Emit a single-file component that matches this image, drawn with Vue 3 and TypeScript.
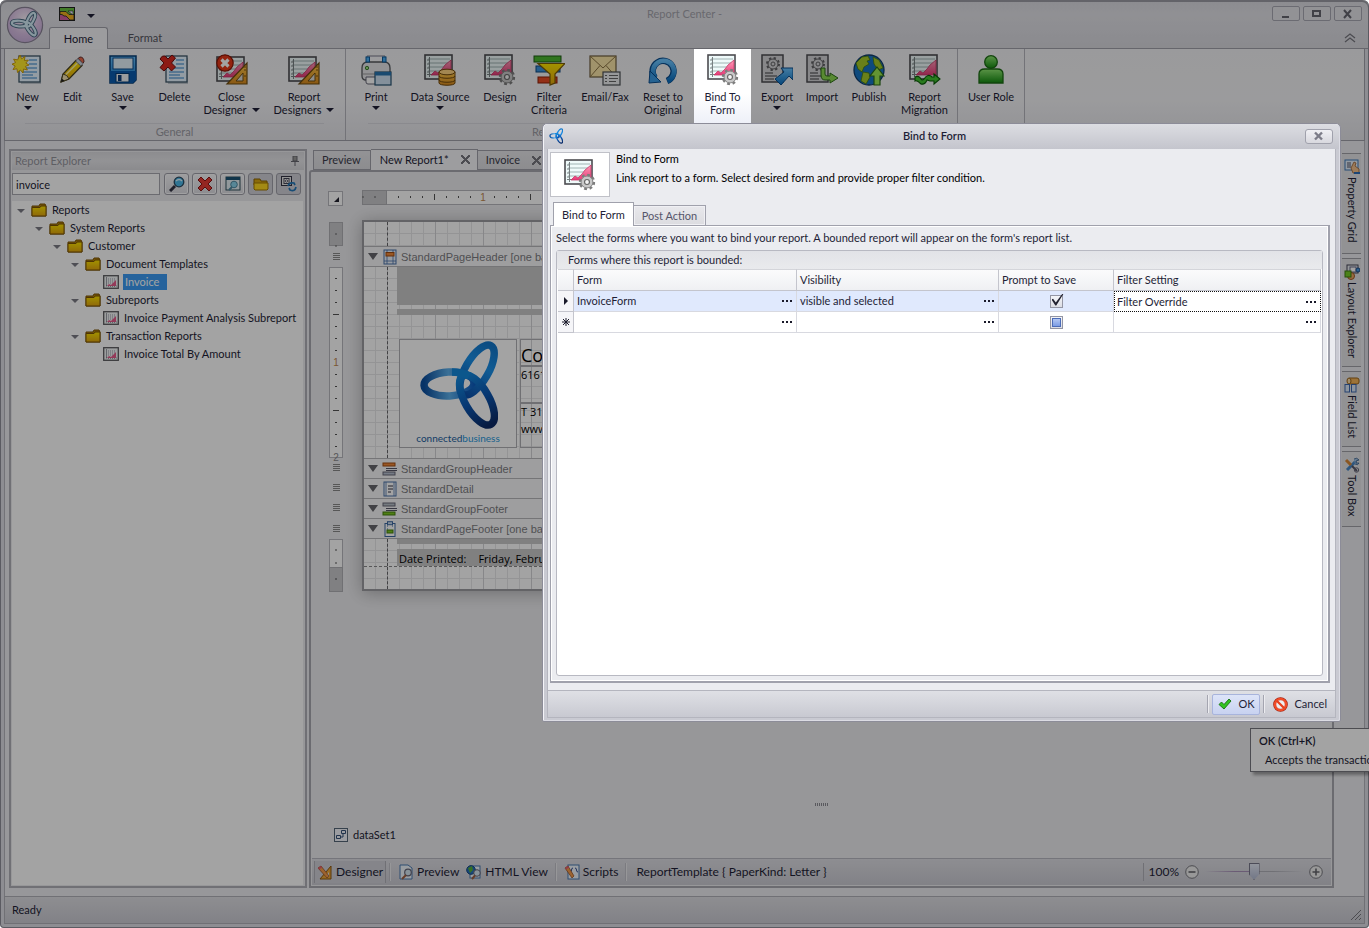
<script setup lang="ts">
import { ref } from 'vue'

interface RibbonItem { label: string[]; icon: string; w: number; arrow?: boolean; inlineArrow?: boolean; bright?: boolean }
interface TreeNode { label: string; depth: number; report?: boolean; selected?: boolean }
interface Band { label: string; icon: string }

const general: RibbonItem[] = [
  { label: ['New'], icon: 'new', w: 45, arrow: true },
  { label: ['Edit'], icon: 'edit', w: 45 },
  { label: ['Save'], icon: 'save', w: 55, arrow: true },
  { label: ['Delete'], icon: 'delete', w: 49 },
  { label: ['Close', 'Designer'], icon: 'close-designer', w: 65, inlineArrow: true },
  { label: ['Report', 'Designers'], icon: 'designer', w: 80, inlineArrow: true },
]
const report: RibbonItem[] = [
  { label: ['Print'], icon: 'print', w: 56, arrow: true },
  { label: ['Data Source'], icon: 'data', w: 72, arrow: true },
  { label: ['Design'], icon: 'chart-gear', w: 48 },
  { label: ['Filter', 'Criteria'], icon: 'filter', w: 50 },
  { label: ['Email/Fax'], icon: 'mail', w: 62 },
  { label: ['Reset to', 'Original'], icon: 'reset', w: 54 },
  { label: ['Bind To', 'Form'], icon: 'chart-gear', w: 57, bright: true },
  { label: ['Export'], icon: 'export', w: 52, arrow: true },
  { label: ['Import'], icon: 'import', w: 38 },
  { label: ['Publish'], icon: 'publish', w: 56 },
  { label: ['Report', 'Migration'], icon: 'migrate', w: 55 },
]
const users: RibbonItem[] = [{ label: ['User Role'], icon: 'user', w: 66 }]
const groups = [
  { name: 'General', items: general },
  { name: 'Report', items: report, wide: true },
  { name: '', items: users },
]

const tree: TreeNode[] = [
  { label: 'Reports', depth: 0 },
  { label: 'System Reports', depth: 1 },
  { label: 'Customer', depth: 2 },
  { label: 'Document Templates', depth: 3 },
  { label: 'Invoice', depth: 4, report: true, selected: true },
  { label: 'Subreports', depth: 3 },
  { label: 'Invoice Payment Analysis Subreport', depth: 4, report: true },
  { label: 'Transaction Reports', depth: 3 },
  { label: 'Invoice Total By Amount', depth: 4, report: true },
]
const tools = [
  { icon: 'search', label: 'Search' },
  { icon: 'x', label: 'Clear' },
  { icon: 'preview-win', label: 'Preview' },
  { icon: 'open', label: 'Folders', on: true },
  { icon: 'sync', label: 'Refresh', on: true },
]
const lowerBands: Band[] = [
  { label: 'StandardGroupHeader', icon: 'b-ghead' },
  { label: 'StandardDetail', icon: 'b-detail' },
  { label: 'StandardGroupFooter', icon: 'b-gfoot' },
  { label: 'StandardPageFooter [one band per page]', icon: 'b-pfoot' },
]
const sideTabs = [
  { label: 'Property Grid', icon: 's-prop', h: 101 },
  { label: 'Layout Explorer', icon: 's-layout', h: 109 },
  { label: 'Field List', icon: 's-field', h: 76 },
  { label: 'Tool Box', icon: 's-tool', h: 76 },
]
const query = ref('invoice')
const zoom = ref(50)
const prompt = ref(true)
const ticks = Array.from({ length: 17 }, (_, i) => i + 1)
const vticks = Array.from({ length: 15 }, (_, i) => i + 1)
</script>

<template>
  <div class="app">
    <svg width="0" height="0" class="defs" aria-hidden="true">
      <defs>
        <linearGradient id="gGold" x1="0" y1="0" x2="0" y2="1"><stop offset="0" stop-color="#ffe600" /><stop offset="1" stop-color="#e0a410" /></linearGradient>
        <linearGradient id="gBlue" x1="0" y1="0" x2="0" y2="1"><stop offset="0" stop-color="#6cc4ff" /><stop offset="1" stop-color="#0a6fc0" /></linearGradient>
        <linearGradient id="gPink" x1="0" y1="0" x2="0" y2="1"><stop offset="0" stop-color="#ff9cb8" /><stop offset="1" stop-color="#e83a78" /></linearGradient>
        <linearGradient id="gGreen" x1="0" y1="0" x2="0" y2="1"><stop offset="0" stop-color="#8fe870" /><stop offset="1" stop-color="#138a10" /></linearGradient>
        <linearGradient id="gOrange" x1="0" y1="0" x2="0" y2="1"><stop offset="0" stop-color="#ffc94a" /><stop offset="1" stop-color="#d88a1e" /></linearGradient>
        <linearGradient id="gLogo" x1="0" y1="0" x2="1" y2="0"><stop offset="0" stop-color="#0c50ac" /><stop offset=".6" stop-color="#1a90e8" /><stop offset="1" stop-color="#1478cc" /></linearGradient>
        <linearGradient id="gLogo2" x1="0" y1="0" x2="1" y2="0"><stop offset="0" stop-color="#0c50a0" /><stop offset=".5" stop-color="#5cb0ec" /><stop offset="1" stop-color="#0b5cc0" /></linearGradient>
        <linearGradient id="gLogo3" x1="0" y1="0" x2="1" y2="0"><stop offset="0" stop-color="#1488dc" /><stop offset=".5" stop-color="#0c58b4" /><stop offset="1" stop-color="#0b2a66" /></linearGradient>
        <radialGradient id="gOrb" cx=".5" cy=".35" r=".7"><stop offset="0" stop-color="#fbf4fc" /><stop offset=".6" stop-color="#d9bfe4" /><stop offset="1" stop-color="#c6aeda" /></radialGradient>
      </defs>
      <symbol id="chart" viewBox="0 0 32 32">
        <rect x="1" y="1" width="27" height="24" fill="#effafa" stroke="#4c4c50" stroke-width="1.600" />
        <path d="M4 5h22M4 9h22M4 13h22M4 17h22" stroke="#a0b4b4" />
        <path d="M5.500 3v20M3 20.500h24M3 6h3M3 10h3M3 14h3M3 18h3" stroke="#788082" fill="none" />
        <path d="M7 21l4-4 3 2 4-4 3-4 6-5v15z" fill="url(#gPink)" stroke="#c83868" stroke-width=".8" />
      </symbol>
      <symbol id="gear" viewBox="0 0 18 18">
        <circle cx="9" cy="9" r="7" fill="none" stroke="#7c7c7c" stroke-width="3.400" stroke-dasharray="2.800 2.700" />
        <circle cx="9" cy="9" r="6.300" fill="#c8c8c8" stroke="#848484" stroke-width="1" />
        <circle cx="9" cy="9" r="2.600" fill="#f4f4f4" stroke="#666" stroke-width="1.200" />
      </symbol>
      <symbol id="doc" viewBox="0 0 32 32">
        <path d="M9 4h20v26H9z" fill="#8b98a4" opacity=".5" />
        <rect x="7" y="2" width="21" height="26" fill="#e6f4ff" stroke="#3c5566" stroke-width="1.300" />
        <path d="M17 6h8M17 10h8M14 14h11M10 18h15M10 21h11M10 24h15" stroke="#2f80c8" stroke-width="1.200" />
      </symbol>
      <symbol id="i-new" viewBox="0 0 32 32">
        <use href="#doc" width="32" height="32" />
        <path d="M8 1l1.600 3.800L13 2.500l-.6 4 4-.4-2.600 3L17 11l-3.600 1.400 2 3.600-3.900-1L11 19l-2.600-3L5.500 18.500 5 14.800l-4 .7L3.200 12 0 10.200l3.500-1.600L1.600 5.200l4 .6z" fill="#ffe92a" stroke="#c89600" stroke-width=".9" />
      </symbol>
      <symbol id="i-edit" viewBox="0 0 32 32">
        <path d="M4 28l2-8L19 6.500l6 5L12 25z" fill="url(#gGold)" stroke="#4c4420" stroke-width="1.300" />
        <path d="M8.500 21L21 8.500" stroke="#fff6a0" stroke-width="1.600" />
        <path d="M21 4.500l2-1.500q4 0 4 5l-1.500 1.500z" fill="#e8694c" stroke="#603030" />
        <path d="M18.500 7l2.500-2.500 5 5-2 2.700z" fill="#ccd4da" stroke="#445" stroke-width=".6" />
        <path d="M4 28l2-8q4.500.5 6 5z" fill="#f2e2b0" stroke="#4c4420" /><path d="M4 28l.9-3.500 2.500 2.200z" fill="#222" />
      </symbol>
      <symbol id="i-save" viewBox="0 0 32 32">
        <path d="M3 2h26v24l-3 3H3z" fill="url(#gBlue)" stroke="#053c74" stroke-width="1.500" />
        <path d="M3 17h26v9l-3 3H3z" fill="#0a5cae" />
        <rect x="6" y="4" width="20" height="11" fill="#e4f2fa" stroke="#0a4a8c" />
        <rect x="9" y="19.500" width="13" height="8.500" fill="#f0f4f8" stroke="#053c74" /><rect x="11" y="21" width="3.500" height="6" fill="#0c3c78" />
      </symbol>
      <symbol id="i-delete" viewBox="0 0 32 32">
        <use href="#doc" width="32" height="32" />
        <path d="M1 5q2-4 5-3l3 3 4-4 3.500 3-4 5 4 4-4 4L9 13l-4 4-4-3.500L5 9z" fill="#dc2a20" stroke="#701010" />
      </symbol>
      <symbol id="tri" viewBox="0 0 32 32">
        <path d="M11 30L31 9v21z" fill="url(#gOrange)" stroke="#6c4c10" stroke-width="1.200" /><path d="M20 27l7-8v8z" fill="#dcdcd8" stroke="#6c4c10" />
        <path d="M27 13h3M28 16h2M28 22h2" stroke="#7c5410" />
      </symbol>
      <symbol id="i-designer" viewBox="0 0 32 32"><use href="#chart" y="2" width="32" height="32" /><use href="#tri" width="32" height="32" /></symbol>
      <symbol id="i-close-designer" viewBox="0 0 32 32">
        <use href="#chart" y="2" width="32" height="32" /><use href="#tri" width="32" height="32" />
        <circle cx="9" cy="9" r="8.200" fill="#e63818" stroke="#8c1808" stroke-width="1.200" />
        <path d="M5.500 5.500l7 7M12.500 5.500l-7 7" stroke="#fff" stroke-width="3.200" />
      </symbol>
      <symbol id="i-print" viewBox="0 0 32 32">
        <path d="M7 9V2h18v7z" fill="#f4f4f8" stroke="#778" />
        <path d="M2 22v-8q0-6 6-6h16q6 0 6 6v8q0 4-4 4H6q-4 0-4-4z" fill="#e4e4e8" stroke="#55585c" stroke-width="1.300" />
        <path d="M6 23h20v7H8q-2 0-2-2z" stroke="#667" fill="#fff" /><path d="M3 20h26" stroke="#999" /><circle cx="7" cy="14" r="1.700" fill="#9ae080" stroke="#3c7c30" />
        <rect x="6" y="3" width="3.500" height="5" fill="#4cb0f4" stroke="#0c5c9c" /><rect x="22.500" y="3" width="3.500" height="5" fill="#4cb0f4" stroke="#0c5c9c" />
        <rect x="15" y="18" width="16" height="13" fill="#cfe2f2" stroke="#24506e" stroke-width="1.200" /><rect x="15" y="18" width="16" height="3.500" fill="#2874b0" />
      </symbol>
      <symbol id="i-data" viewBox="0 0 32 32">
        <use href="#chart" width="32" height="32" />
        <path d="M15 18v11c0 3 16 3 16 0V18z" fill="url(#gOrange)" stroke="#70480c" /><ellipse cx="23" cy="18" rx="8" ry="2.800" fill="#ffd480" stroke="#70480c" />
        <path d="M15 22c0 3 16 3 16 0M15 26c0 3 16 3 16 0" fill="none" stroke="#70480c" />
      </symbol>
      <symbol id="i-chart-gear" viewBox="0 0 32 32"><use href="#chart" width="32" height="32" /><use href="#gear" x="14.500" y="14.500" width="17" height="17" /></symbol>
      <symbol id="i-filter" viewBox="0 0 32 32">
        <rect x="1" y="2" width="27" height="6" fill="#4cb830" stroke="#1c5c10" /><rect x="3" y="12" width="24" height="6" fill="#3c94dc" stroke="#0c4880" /><rect x="5" y="23" width="19" height="6" fill="#e84c24" stroke="#8c2008" />
        <path d="M5 9.500h27L22 20v9l-5 2V20z" fill="url(#gGold)" stroke="#7c5c08" stroke-width="1.200" />
      </symbol>
      <symbol id="i-mail" viewBox="0 0 32 32">
        <rect x="1" y="2" width="26" height="21" fill="#fbe7a8" stroke="#6c5c3c" stroke-width="1.200" /><path d="M1 2l13 12L27 2M1 23l10-11.500M27 23L17 11.500" fill="none" stroke="#8c7444" />
        <rect x="14" y="18" width="17" height="13" fill="#eceef0" stroke="#4c5054" stroke-width="1.200" /><path d="M16 21.500h2M20 21.500h9M16 24.500h2M20 24.500h9M16 27.500h2M20 27.500h7" stroke="#666" />
      </symbol>
      <symbol id="i-reset" viewBox="0 0 32 32">
        <path d="M20 27a10.500 10.500 0 1 0-12-3" fill="none" stroke="#0a4c8c" stroke-width="6.400" /><path d="M20.500 27a10.500 10.500 0 1 0-12-3" fill="none" stroke="url(#gBlue)" stroke-width="4.600" />
        <path d="M2 29l1-12 11 11z" fill="#3c9ce4" stroke="#0a4c8c" />
      </symbol>
      <symbol id="sheet" viewBox="0 0 32 32">
        <rect x="1" y="1" width="21" height="27" fill="#d4d4d6" stroke="#4c4c50" stroke-width="1.500" />
        <circle cx="12" cy="10" r="6" fill="none" stroke="#606064" stroke-width="2" stroke-dasharray="2.300 2.400" /><circle cx="12" cy="10" r="5" fill="#d4d4d6" stroke="#606064" /><circle cx="12" cy="10" r="2" fill="none" stroke="#606064" />
        <path d="M4 19h8M4 22h12M4 25h9" stroke="#707074" stroke-width="1.300" />
      </symbol>
      <symbol id="i-export" viewBox="0 0 32 32"><use href="#sheet" width="32" height="32" /><path d="M20 14h12v12l-4-4-8 9-6-6 9-7z" fill="url(#gBlue)" stroke="#0a4c8c" /></symbol>
      <symbol id="i-import" viewBox="0 0 32 32"><use href="#sheet" width="32" height="32" /><path d="M15 14h4v6q0 2 2 2h3v-3l8 5-8 5v-3h-5q-4 0-4-5z" fill="#8cd850" stroke="#2c6c18" /></symbol>
      <symbol id="i-publish" viewBox="0 0 32 32">
        <circle cx="16" cy="16" r="15" fill="#1674c4" stroke="#103c6c" stroke-width="1.300" />
        <path d="M3 9l6-6 6-1 2 4-3 1 2 3-5 3-2 5-4-3zM10 18l6 1 1 4-4 7-5-3zM20 3l6 3 4 8-5 2-4-6z" fill="#a4c828" stroke="#48780c" stroke-width=".8" />
        <path d="M24 13l7 9h-4v9h-6v-9h-4z" fill="#9ce850" stroke="#2c6c18" stroke-width="1.200" />
      </symbol>
      <symbol id="i-migrate" viewBox="0 0 32 32"><use href="#chart" width="32" height="32" /><path d="M6 23q4-2 6 2 1 2 3 0 4-6 8-2h2v-3l6 5-6 5v-3h-4l-3-1q-2 5-6 4-4-4-6-3z" fill="#40c030" stroke="#0c5c08" stroke-width="1.100" /></symbol>
      <symbol id="i-user" viewBox="0 0 32 32">
        <path d="M4 29v-9c0-4 3-5 6-5h12c3 0 6 1 6 5v9z" fill="url(#gGreen)" stroke="#1c6c14" stroke-width="1.300" /><circle cx="16" cy="8" r="6.300" fill="url(#gGreen)" stroke="#1c6c14" stroke-width="1.300" />
      </symbol>
      <symbol id="folder" viewBox="0 0 16 14">
        <path d="M1 3h7l1-2h5l1 2v10H1z" fill="#b8860c" stroke="#7c5404" /><path d="M1 4.500h8l1-1.500h5v10H1z" fill="url(#gGold)" stroke="#7c5404" />
      </symbol>
      <symbol id="report" viewBox="0 0 16 14">
        <rect x=".7" y=".7" width="14.600" height="12.600" fill="#f4f8f8" stroke="#5c5c60" stroke-width="1.300" /><path d="M3.500 2.500v8.500h10" fill="none" stroke="#445" stroke-dasharray="1 1" />
        <path d="M5 4h8M5 6h8M5 8h8" stroke="#99a" stroke-dasharray="1 1" /><path d="M4 11l2-2 2 1 2-2 3-3v6z" fill="#e85c8c" />
      </symbol>
      <symbol id="i-search" viewBox="0 0 16 16"><path d="M1 15l5-5" stroke="#334" stroke-width="3" /><circle cx="10" cy="6" r="4.800" fill="#4cb8e8" stroke="#2c4c64" stroke-width="1.300" /><path d="M7 5q3-3 6 0" stroke="#d8f4ff" fill="none" stroke-width="1.300" /></symbol>
      <symbol id="i-x" viewBox="0 0 16 16"><path d="M1 4l3-3 4 4 4-4 3 3-4 4 4 4-3 3-4-4-4 4-3-3 4-4z" fill="#e83c34" stroke="#8c1414" /></symbol>
      <symbol id="i-preview-win" viewBox="0 0 16 16"><rect x="1" y="1" width="14" height="13" fill="#e4f0f4" stroke="#30505c" /><rect x="1" y="1" width="14" height="3" fill="#1c5474" /><circle cx="9" cy="8.500" r="3.300" fill="#88d4ec" stroke="#5088a0" /><path d="M4 14l3-3" stroke="#5088a0" stroke-width="2" /></symbol>
      <symbol id="i-open" viewBox="0 0 16 16"><path d="M1 3h6l1 2h6v4H1z" fill="#d8a810" stroke="#8c6404" /><path d="M1 7h14v6l-1 1H2l-1-1z" fill="#ffd820" stroke="#a47804" /></symbol>
      <symbol id="i-sync" viewBox="0 0 16 16"><rect x=".5" y=".5" width="10" height="9" fill="#e8e8e8" stroke="#334" /><rect x="3" y="2.500" width="5" height="5" fill="#fff" stroke="#445" /><circle cx="5.500" cy="5" r="1.200" fill="none" stroke="#445" stroke-width=".8" /><path d="M7 10q1-4 6-3l1 2M15 11q-1 5-6 3l-1-2" fill="none" stroke="#2478b8" stroke-width="1.700" /></symbol>
      <symbol id="knot" viewBox="0 0 80 90">
        <g fill="none" stroke-width="7.500">
          <ellipse cx="31" cy="44" rx="25" ry="12" transform="rotate(-3 31 44)" stroke="url(#gLogo2)" />
          <ellipse cx="59" cy="30" rx="28" ry="11.500" transform="rotate(-60 59 30)" stroke="url(#gLogo)" />
          <ellipse cx="59" cy="60" rx="28" ry="12" transform="rotate(60 59 60)" stroke="url(#gLogo3)" />
          <path d="M34 32q10 0 17 4" stroke="#1488dc" />
        </g>
      </symbol>
      <symbol id="b-phead" viewBox="0 0 14 16"><rect x="1" y="1" width="12" height="14" fill="#eef4fc" stroke="#4870a8" /><path d="M4 1v14M10 1v14M1 12h12" stroke="#4870a8" stroke-width=".8" /><rect x="3" y="3.500" width="8" height="3.500" fill="#f08838" stroke="#a04c10" /></symbol>
      <symbol id="b-ghead" viewBox="0 0 16 14"><rect x="1" y="1" width="12" height="3" fill="#f08838" stroke="#a04c10" /><path d="M4 6.500h11M4 8.500h11" stroke="#556" /><rect x="1" y="10" width="12" height="3" fill="#b8c0d0" stroke="#667" /></symbol>
      <symbol id="b-detail" viewBox="0 0 14 16"><rect x="1" y="1" width="12" height="14" fill="#fff" stroke="#4870a8" /><path d="M3 1v14M11 1v14" stroke="#4870a8" stroke-width=".8" /><path d="M5 5h5M5 8h5M5 11h3" stroke="#334" /></symbol>
      <symbol id="b-gfoot" viewBox="0 0 16 14"><rect x="1" y="1" width="12" height="3" fill="#b8c0c8" stroke="#667" /><path d="M4 6.500h11M4 8.500h11" stroke="#556" /><rect x="1" y="10" width="12" height="3" fill="#7cc820" stroke="#447c10" /></symbol>
      <symbol id="b-pfoot" viewBox="0 0 14 16"><rect x="2" y="2.500" width="10" height="13" fill="#fff" stroke="#3c68a0" /><rect x="4.500" y=".7" width="5" height="3" fill="#c8dcf0" stroke="#3c68a0" /><path d="M4 5h1M4 8h1M9 5h1" stroke="#3c68a0" /><rect x="4" y="9" width="6" height="3" fill="#7cc820" stroke="#447c10" /></symbol>
      <symbol id="t-designer" viewBox="0 0 16 16"><path d="M3 15L14 2v13z" fill="#f0a838" stroke="#8c5810" /><path d="M8 13l4-5v5z" fill="#e4e4e4" /><path d="M1 4l3-2 8 10-2 2z" fill="#f49c4c" stroke="#904c20" stroke-width=".7" /><path d="M1 4l3-2 1 1.500-3 2z" fill="#e85c74" /></symbol>
      <symbol id="t-preview" viewBox="0 0 16 16"><path d="M2 1h8l4 3v11H2z" fill="#f0f6fc" stroke="#4878b0" /><circle cx="10" cy="8.500" r="3.300" fill="#d4e4f0" stroke="#667" stroke-width="1.200" /><path d="M4 15l4-4" stroke="#a06040" stroke-width="2" /></symbol>
      <symbol id="t-html" viewBox="0 0 16 16"><rect x="4" y="2" width="10" height="12" fill="#f0f6fc" stroke="#4878b0" /><circle cx="5" cy="6" r="4.300" fill="#2470c0" stroke="#184880" /><path d="M2 4l4-2 1 4-3 3z" fill="#58b038" /><circle cx="11" cy="9" r="3.300" fill="#d4e4f0" stroke="#667" /><path d="M6 15l3-3.500" stroke="#a06040" stroke-width="2" /></symbol>
      <symbol id="t-script" viewBox="0 0 16 16"><rect x="4" y="1" width="11" height="14" fill="#f0f6fc" stroke="#4878b0" /><path d="M9 4q-1.500 0-1.500 2T6 8q1.500 0 1.500 2T9 12M11 4q1.500 0 1.500 2T14 8" fill="none" stroke="#334c90" /><path d="M1 4l3-2 6 10-2 2z" fill="#f49c4c" stroke="#904c20" stroke-width=".7" /><path d="M1 4l3-2 1 1.500-3 2z" fill="#e85c74" /></symbol>
      <symbol id="s-prop" viewBox="0 0 16 16"><rect x="1" y="1" width="13" height="10" fill="#e4f0fc" stroke="#3c78b8" /><path d="M3 4h4M3 6h4M3 8h4" stroke="#556" /><path d="M7 9l3-6 2 1-1 3 4 3v4H9z" fill="#f4c08c" stroke="#986030" stroke-width=".8" /><path d="M10 14h6" stroke="#2c6cb8" stroke-width="2" /></symbol>
      <symbol id="s-layout" viewBox="0 0 16 16"><rect x="3" y="1" width="11" height="8" fill="#e8ecf0" stroke="#445" /><rect x="6" y="3" width="6" height="5" fill="#fff" stroke="#668" /><circle cx="14" cy="6" r="2" fill="#4898e0" stroke="#184c88" /><circle cx="7" cy="12" r="3.500" fill="#f0a868" stroke="#a05820" /><rect x="1" y="7" width="6" height="6" fill="#78cc28" stroke="#3c7c10" /></symbol>
      <symbol id="s-field" viewBox="0 0 16 16"><rect x="4" y="1" width="11" height="6" rx="2" fill="#f4b458" stroke="#9c6418" /><ellipse cx="5" cy="4" rx="2" ry="3" fill="#fbdca4" stroke="#9c6418" /><rect x="1" y="7.500" width="4.500" height="7.500" fill="#dce8f8" stroke="#3c68b0" /><rect x="7.500" y="7.500" width="4.500" height="7.500" fill="#dce8f8" stroke="#3c68b0" /></symbol>
      <symbol id="s-tool" viewBox="0 0 16 16"><path d="M3 13L12 4" stroke="#4888c8" stroke-width="3" /><path d="M10 2q3-2 5 1l-3 1v2l3 0q-1 3-4 1" fill="#a4c4e4" stroke="#345c88" stroke-width=".8" /><path d="M2 3l5 5" stroke="#d88838" stroke-width="3" /><path d="M8 9l5 5" stroke="#556" stroke-width="2" /><circle cx="12.500" cy="13" r="2.200" fill="none" stroke="#667" /></symbol>
    </svg>

    <header class="titlebar">
      <div class="lead">
        <button class="orb" aria-label="Application menu">
          <svg viewBox="0 0 40 40" width="38" height="38"><circle cx="20" cy="20" r="18.500" fill="url(#gOrb)" stroke="#8c8498" stroke-width="1.300" />
            <g fill="none" stroke="#4c6c84" stroke-width="4.200"><ellipse cx="14" cy="18.500" rx="8" ry="3" transform="rotate(4 14 19)" /><ellipse cx="26" cy="14.500" rx="8" ry="3" transform="rotate(-62 26 14.500)" /><ellipse cx="26" cy="24" rx="8" ry="3" transform="rotate(55 26 24)" /></g>
            <g fill="none" stroke="#d4ecf8" stroke-width="2.200"><ellipse cx="14" cy="18.500" rx="8" ry="3" transform="rotate(4 14 19)" /><ellipse cx="26" cy="14.500" rx="8" ry="3" transform="rotate(-62 26 14.500)" /><ellipse cx="26" cy="24" rx="8" ry="3" transform="rotate(55 26 24)" /></g>
          </svg>
        </button>
        <div class="titlecol">
          <div class="quick">
            <button class="qbtn" aria-label="Theme"><svg viewBox="0 0 16 14" width="16" height="14"><rect x=".5" y=".5" width="15" height="13" fill="#68c040" stroke="#222" /><path d="M1 8h7l2 5H1z" fill="#d060a0" /><path d="M1 4.500h6l3 3h5v5.500h-4L7 9H5L3 7.500H1z" fill="#f0b020" stroke="#222" stroke-width=".8" /><path d="M9 4h5v4z" fill="#eef" stroke="#222" stroke-width=".6" /></svg></button>
            <button class="qbtn" aria-label="Customize"><i class="caret"></i></button>
          </div>
          <nav class="rtabs"><button class="rtab on">Home</button><button class="rtab">Format</button></nav>
        </div>
      </div>
      <h1 class="wtitle">Report Center -</h1>
      <div class="wincol">
        <div class="winbtns">
          <button class="wbtn" aria-label="Minimize"><svg viewBox="0 0 12 10" width="12" height="10"><path d="M2 8h7" stroke="#66666f" stroke-width="2" /></svg></button>
          <button class="wbtn" aria-label="Maximize"><svg viewBox="0 0 12 10" width="12" height="10"><rect x="2" y="2" width="7" height="5" fill="none" stroke="#66666f" stroke-width="2" /></svg></button>
          <button class="wbtn" aria-label="Close"><svg viewBox="0 0 12 10" width="12" height="10"><path d="M2 1l7 8M9 1L2 9" stroke="#66666f" stroke-width="2" /></svg></button>
        </div>
        <button class="collapse" aria-label="Collapse ribbon"><svg viewBox="0 0 14 10" width="14" height="10"><path d="M2 5l5-4 5 4M2 9l5-4 5 4" fill="none" stroke="#77777f" stroke-width="1.300" /></svg></button>
      </div>
    </header>

    <section class="ribbon">
      <div v-for="g in groups" :key="g.name" class="group">
        <div class="items">
          <button v-for="it in g.items" :key="it.label.join()" class="item" :class="{ bright: it.bright }" :style="{ width: it.w + 'px' }">
            <svg class="i32"><use :href="'#i-' + it.icon" /></svg>
            <span v-for="(l, i) in it.label" :key="l" class="lbl">{{ l }}<i v-if="it.inlineArrow && i === 1" class="caret gap"></i></span>
            <i v-if="it.arrow" class="caret below"></i>
          </button>
        </div>
        <div class="gname" :class="{ left: g.wide }">{{ g.name }}</div>
      </div>
    </section>

    <main class="body">
      <aside class="explorer">
        <h2 class="phead">Report Explorer<svg viewBox="0 0 8 10" width="8" height="10"><path d="M2 0h4v5H2zM0 5.500h8M4 6v4" fill="#999" stroke="#66666f" /></svg></h2>
        <div class="search">
          <input v-model="query" class="sinput" aria-label="Search reports" />
          <button v-for="t in tools" :key="t.icon" class="tbtn" :class="{ on: t.on }" :aria-label="t.label"><svg class="i16"><use :href="'#i-' + t.icon" /></svg></button>
        </div>
        <ul class="tree">
          <li v-for="n in tree" :key="n.label" class="node" :style="{ paddingLeft: n.depth * 18 + 'px' }">
            <i class="exp" :class="{ none: n.report }"></i>
            <svg width="16" height="14"><use :href="n.report ? '#report' : '#folder'" /></svg>
            <span class="ntext" :class="{ sel: n.selected }">{{ n.label }}</span>
          </li>
        </ul>
      </aside>

      <section class="center">
        <nav class="dtabs">
          <button class="dtab">Preview</button>
          <button class="dtab on">New Report1*<b class="tx"></b></button>
          <button class="dtab">Invoice<b class="tx"></b></button>
        </nav>
        <div class="designer">
          <div class="canvas">
            <div class="vcol">
              <div class="corner"><svg viewBox="0 0 8 8" width="8" height="8"><path d="M7 2v5H2z" fill="#222230" /></svg></div>
              <svg class="vruler" width="14" height="376">
                <rect x=".5" y=".5" width="13" height="23" fill="#c8c8cc" stroke="#b0b0b4" /><path d="M6 12h2M6 24h2" stroke="#666" />
                <rect x=".5" y="45.500" width="13" height="190" fill="#fff" stroke="#b8b8be" />
                <path v-for="t in vticks" :key="t" :d="t % 4 ? `M6 ${44.5 + t * 12}h2` : t % 8 ? `M4 ${44.5 + t * 12}h6` : ''" stroke="#555" />
                <text x="7" y="144" class="rnum" fill="#c08850">1</text><text x="7" y="239" class="rnum" fill="#88888c">2</text>
                <path v-for="y in [31, 242, 262, 282, 303]" :key="y" :d="`M4 ${y + .5}h7m-7 2h7m-7 2h7m-7 2h7`" stroke="#888" />
                <rect x=".5" y="317.500" width="13" height="28" fill="#fff" stroke="#b8b8be" /><rect x=".5" y="345.500" width="13" height="24" fill="#c8c8cc" stroke="#b0b0b4" />
                <path d="M6 328h2M6 341h2M6 357h2" stroke="#555" />
              </svg>
            </div>
            <div class="pcol">
              <svg class="hruler" width="600" height="15">
                <rect x=".5" y=".5" width="599" height="14" fill="#fff" stroke="#b8b8be" /><rect x=".5" y=".5" width="24" height="14" fill="#c8c8cc" stroke="#b0b0b4" />
                <path d="M1 6v2M13 6v2" stroke="#666" />
                <path v-for="t in ticks" :key="t" :d="t % 4 ? `M${24.5 + t * 12} 6v2` : t % 8 ? `M${24.5 + t * 12} 4v6` : ''" stroke="#555" />
                <text x="121" y="11" class="rnum" fill="#c08850">1</text>
              </svg>
              <div class="page">
                <div class="grid mtop"></div>
                <div class="band"><i class="bt"></i><svg width="16" height="16"><use href="#b-phead" /></svg>StandardPageHeader [one band per page]</div>
                <div class="grid head">
                  <div class="fill big"></div><div class="fill thin"></div>
                  <div class="boxes">
                    <div class="logo"><svg width="80" height="90"><use href="#knot" /></svg><p class="brand">connected<span>business</span></p></div>
                    <div class="addr"><p class="co">Company Name</p><p class="ad">6161 Street</p><p class="ph">T 310</p><p class="web">www.</p></div>
                  </div>
                </div>
                <div v-for="b in lowerBands" :key="b.label" class="band"><i class="bt"></i><svg width="16" height="16"><use :href="'#' + b.icon" /></svg>{{ b.label }}</div>
                <div class="grid foot">
                  <div class="fill line"></div>
                  <div class="fill date"><span>Date Printed:</span><span>Friday, February</span></div>
                </div>
                <div class="grid mbot"></div>
              </div>
            </div>
          </div>
          <div class="splitter"></div>
          <div class="tray"><svg viewBox="0 0 14 14" width="14" height="14"><rect x=".5" y=".5" width="13" height="13" fill="#f4f6fc" stroke="#567" /><path d="M2.500 7.500h4v3h-4zM7.500 2.500h4v3h-4zM9 6v3H7" fill="none" stroke="#345078" /></svg>dataSet1</div>
          <footer class="dbar">
            <button class="dbtn on"><svg class="i16"><use href="#t-designer" /></svg>Designer</button><i class="dsep"></i>
            <button class="dbtn"><svg class="i16"><use href="#t-preview" /></svg>Preview</button>
            <button class="dbtn"><svg class="i16"><use href="#t-html" /></svg>HTML View</button><i class="dsep"></i>
            <button class="dbtn"><svg class="i16"><use href="#t-script" /></svg>Scripts</button><i class="dsep"></i>
            <span class="tpl">ReportTemplate { PaperKind: Letter }</span>
            <span class="zoom"><span>100%</span>
              <button class="zb" aria-label="Zoom out"><svg viewBox="0 0 14 14" width="14" height="14"><circle cx="7" cy="7" r="6.300" fill="#eee" stroke="#77777e" /><path d="M3.500 7h7" stroke="#66666c" stroke-width="1.600" /></svg></button>
              <input v-model="zoom" class="zr" type="range" aria-label="Zoom" />
              <button class="zb" aria-label="Zoom in"><svg viewBox="0 0 14 14" width="14" height="14"><circle cx="7" cy="7" r="6.300" fill="#eee" stroke="#77777e" /><path d="M3.500 7h7M7 3.500v7" stroke="#66666c" stroke-width="1.600" /></svg></button>
            </span>
          </footer>
        </div>
      </section>

      <nav class="side">
        <button v-for="s in sideTabs" :key="s.label" class="stab" :style="{ height: s.h + 'px' }"><svg class="i16"><use :href="'#' + s.icon" /></svg><span>{{ s.label }}</span></button>
      </nav>
    </main>

    <footer class="status">Ready<svg viewBox="0 0 12 12" width="12" height="12"><path d="M1 11L11 1M5 11l6-6M9 11l2-2" stroke="#77777e" /></svg></footer>

    <div class="tip" role="tooltip"><b>OK (Ctrl+K)</b><span>Accepts the transaction</span></div>
    <div class="shade"></div>

    <section class="dialog" role="dialog" aria-label="Bind to Form">
      <header class="dtitle">
        <svg viewBox="0 0 80 90" width="16" height="16"><use href="#knot" width="80" height="90" /></svg>
        <span>Bind to Form</span>
        <button class="dclose" aria-label="Close"><svg viewBox="0 0 12 10" width="12" height="10"><path d="M2 1.500l7 7M9 1.500l-7 7" stroke="#7c7c88" stroke-width="2.400" /></svg></button>
      </header>
      <div class="dbody">
        <div class="intro"><div class="ibox"><svg class="i32"><use href="#i-chart-gear" /></svg></div>
          <div class="itxt"><p>Bind to Form</p><p>Link report to a form. Select desired form and provide proper filter condition.</p></div></div>
        <nav class="ptabs"><button class="ptab on">Bind to Form</button><button class="ptab">Post Action</button></nav>
        <div class="panel">
          <p class="hint">Select the forms where you want to bind your report. A bounded report will appear on the form's report list.</p>
          <div class="gbox">
            <h3 class="gcap">Forms where this report is bounded:</h3>
            <table class="tbl">
              <colgroup><col class="c0" /><col class="c1" /><col class="c2" /><col class="c3" /><col /></colgroup>
              <thead><tr><th></th><th>Form</th><th>Visibility</th><th>Prompt to Save</th><th>Filter Setting</th></tr></thead>
              <tbody>
                <tr class="cur">
                  <td class="ind"><svg viewBox="0 0 6 8" width="6" height="8"><path d="M1 0l4 4-4 4z" fill="#1a1a2a" /></svg></td>
                  <td><div class="cell">InvoiceForm<button class="dots" aria-label="Choose form"></button></div></td>
                  <td><div class="cell">visible and selected<button class="dots" aria-label="Choose visibility"></button></div></td>
                  <td class="ck"><input v-model="prompt" type="checkbox" aria-label="Prompt to save" /></td>
                  <td class="focus"><div class="cell">Filter Override<button class="dots" aria-label="Edit filter"></button></div></td>
                </tr>
                <tr>
                  <td class="ind"><svg viewBox="0 0 8 8" width="8" height="8"><path d="M4 0v8M0 4h8M1 1l6 6M7 1L1 7" stroke="#1a1a2a" /></svg></td>
                  <td><div class="cell"><button class="dots" aria-label="Choose form"></button></div></td>
                  <td><div class="cell"><button class="dots" aria-label="Choose visibility"></button></div></td>
                  <td class="ck"><input type="checkbox" class="mixed" aria-label="Prompt to save, new row" /></td>
                  <td><div class="cell"><button class="dots" aria-label="Edit filter"></button></div></td>
                </tr>
              </tbody>
            </table>
          </div>
        </div>
      </div>
      <footer class="dfoot">
        <i class="fsep"></i>
        <button class="fbtn ok"><svg viewBox="0 0 14 12" width="14" height="12"><path d="M1 6.500L3.500 4l2.500 2.500L11 1l2 2-7 8z" fill="#30c420" stroke="#167010" stroke-width=".9" /></svg>OK</button>
        <i class="fsep"></i>
        <button class="fbtn"><svg viewBox="0 0 16 16" width="15" height="15"><circle cx="8" cy="8" r="6" fill="none" stroke="#a02010" stroke-width="3.600" /><circle cx="8" cy="8" r="6" fill="#fff" fill-opacity=".6" stroke="#f04c28" stroke-width="2.400" /><path d="M4 4l8 8" stroke="#e8401c" stroke-width="2.400" /></svg>Cancel</button>
      </footer>
    </section>
  </div>
</template>

<style>
body { margin: 0; background: #fff; }
</style>
<style scoped>
.app { position: relative; display: flex; flex-direction: column; min-height: 100vh; box-sizing: border-box; overflow: hidden; padding: 0 4px 4px; border-radius: 6px 6px 4px 4px; background: #dddde4; box-shadow: inset 0 0 0 1px #8f8f99; color: #1e1e36; font: 11px/14px Lato, "Liberation Sans", sans-serif; }
.defs { position: absolute; }
button { font: inherit; color: inherit; background: none; border: 0; padding: 0; margin: 0; }
p, h1, h2, h3, ul { margin: 0; padding: 0; font: inherit; list-style: none; }
svg { display: block; flex: none; }
.i32 { width: 32px; height: 32px; }
.i16 { width: 16px; height: 16px; }
.caret { display: inline-block; border: 4px solid transparent; border-top-color: #1e1e36; border-bottom: 0; }

.titlebar { display: grid; grid-template-columns: 1fr auto 1fr; height: 49px; margin: 0 -3px; padding: 0 3px; border-bottom: 1px solid #a0a0aa; background: linear-gradient(#dbdbe1, #e2e2e8 30%, #d9d9df); box-sizing: border-box; box-shadow: inset 0 2px #9c9ca4; border-radius: 6px 6px 0 0; }
.lead { display: flex; }
.orb { width: 38px; height: 38px; margin: 6px 5px 0 2px; }
.titlecol { display: flex; flex-direction: column; justify-content: space-between; }
.quick { display: flex; gap: 12px; padding: 7px 0 0 10px; align-items: center; }
.rtabs { display: flex; }
.rtab { width: 74px; height: 21px; margin-bottom: -1px; color: #55555f; }
.rtab.on { width: 59px; height: 22px; background: #f4f4f7; border: 1px solid #a0a0aa; border-bottom: 0; border-radius: 3px 3px 0 0; color: #1e1e36; }
.wtitle { padding-top: 7px; color: #a4a4ac; }
.wincol { display: flex; flex-direction: column; align-items: flex-end; gap: 12px; padding: 6px 8px 0 0; }
.winbtns { display: flex; gap: 3px; margin-right: -5px; }
.wbtn { width: 28px; height: 15px; border: 1px solid #a8a8b2; border-radius: 2px; background: #e4e4ea; display: grid; place-items: center; }

.ribbon { display: flex; height: 92px; box-sizing: border-box; background: linear-gradient(#f1f1f4, #f3f3f6 55%, #e4e4e9); border: 1px solid #a0a0aa; border-top: 0; }
.group { display: flex; flex-direction: column; border-right: 1px solid #b4b4bc; padding: 0 5px 0 0; }
.group:nth-child(1) { padding: 0 1px 0 0; }
.group:nth-child(2) { padding-left: 2px; }
.group:nth-child(3) { padding: 0; }
.items { display: flex; height: 74px; }
.item { display: flex; flex-direction: column; align-items: center; padding-top: 5px; white-space: nowrap; }
.item .i32 { margin-bottom: 4px; }
.lbl { line-height: 13px; }
.caret.below { margin-top: 3px; }
.caret.gap { margin: 0 0 2px 5px; }
.item.bright { position: relative; z-index: 3; background: linear-gradient(#fff 60%, #eef0f8); margin-left: 4px; }
.gname { margin: 0 20px; border-top: 1px solid #d8d8de; text-align: center; color: #9b9ba3; line-height: 15px; height: 16px; }
.gname.left { text-align: left; padding-left: 164px; }

.body { flex: 1; display: flex; padding: 7px 0 8px 4px; background: #ededf1; border: 1px solid #b4b4bc; border-width: 0 1px; }
.explorer { width: 298px; box-sizing: border-box; border: 2px solid #b0b0b8; background: #ececf0; display: flex; flex-direction: column; padding: 1px; margin: 1px 0 0; }
.phead { display: flex; justify-content: space-between; align-items: center; height: 18px; padding: 0 5px 0 3px; background: linear-gradient(#dcdce0, #e6e6ea 50%, #d9d9dd); color: #94949c; }
.search { display: flex; gap: 3px; padding: 3px 1px 6px 0; }
.sinput { width: 148px; box-sizing: border-box; height: 22px; border: 1px solid #a8a8b0; padding: 0 3px; font: inherit; color: inherit; background: #fff; margin-right: 1px; }
.tbtn { width: 25px; height: 22px; border: 1px solid #a0a0aa; border-radius: 3px; background: linear-gradient(#f8f8fa, #dcdce2); display: grid; place-items: center; box-shadow: inset 0 0 0 1px #fafafc; }
.tbtn.on { background: #d0d0d8; box-shadow: none; }
.tree { flex: 1; background: #fff; margin-right: 1px; }
.node { display: flex; align-items: center; height: 18px; }
.exp { width: 0; border: 4px solid transparent; border-top-color: #7c7c86; border-bottom: 0; margin: 2px 6px 0 5px; }
.exp.none { visibility: hidden; }
.ntext { margin-left: 4px; padding: 0 1px; white-space: nowrap; }
.ntext.sel { background: #3c9cf4; color: #fff; line-height: 16px; margin-left: 4px; padding: 0 8px 0 2px; }

.center { flex: 1; min-width: 0; display: flex; flex-direction: column; margin-left: 2px; }
.dtabs { display: flex; align-items: flex-end; padding-left: 4px; height: 22px; }
.dtab { height: 20px; padding: 0 9px 0 8px; border: 1px solid #a0a0aa; border-left-width: 0; background: linear-gradient(#e6e6ea, #dcdce0); color: #3c3c4c; display: flex; align-items: center; gap: 12px; white-space: nowrap; }
.dtab:first-child { border-left-width: 1px; }
.dtab.on { height: 22px; padding: 0 7px 2px 9px; background: #f6f6f9; border-bottom: 0; color: #1e1e36; margin-bottom: -1px; }
.tx { width: 9px; height: 9px; background: linear-gradient(45deg, transparent 40%, #77777f 40% 60%, transparent 60%), linear-gradient(-45deg, transparent 40%, #77777f 40% 60%, transparent 60%); }
.designer { flex: 1; display: flex; flex-direction: column; border: 2px solid #a8a8b0; background: #ededf0; padding: 1px; border-radius: 3px 0 0 0; }
.canvas { display: flex; gap: 18px; padding: 17px 0 0 17px; flex: 1; }
.vcol { width: 15px; }
.corner { width: 13px; height: 13px; border: 1px solid #b8b8be; background: #fff; display: grid; place-items: center; margin: 1px 0 16px -1px; }
.hruler { display: block; }
.rnum { font: 10px "Liberation Sans", sans-serif; text-anchor: middle; }
.page { margin-top: 15px; width: 600px; border: 2px solid #9c9ca0; border-right: 0; box-sizing: border-box; box-shadow: 0 2px 16px rgba(0, 0, 0, .28); background: #fff; }
.grid { position: relative; background: linear-gradient(90deg, #d4d4d6 1px, transparent 1px) 23px 0 / 48px 12px, linear-gradient(90deg, #e8e8ea 1px, transparent 1px) 11px 0 / 12px 12px, linear-gradient(#e8e8ea 1px, transparent 1px) 0 11px / 12px 12px, #fff; }
.grid::before { content: ""; position: absolute; left: 23px; top: 0; bottom: 0; border-left: 1px dashed #66666a; }
.mtop { height: 24px; }
.band { display: flex; align-items: center; height: 19px; border-top: 1px solid #b8b8ba; background: #f8f8f9; color: #7c7c82; font: 11px "Liberation Sans", sans-serif; white-space: nowrap; gap: 3px; }
.bt { border: 5px solid transparent; border-top: 7px solid #66666c; border-bottom: 0; margin: 0 1px 0 4px; }
.head { height: 191px; border-top: 1px solid #b8b8ba; }
.fill { background: #c8c8c9; margin-left: 33px; }
.big { height: 38px; }
.thin { height: 6px; margin-top: 4px; }
.boxes { display: flex; gap: 3px; padding: 24px 0 0 35px; }
.logo { width: 116px; height: 107px; border: 1px solid #b0b0b4; background: #fff; display: flex; flex-direction: column; align-items: center; }
.brand { color: #2060a0; font-size: 10px; line-height: 12px; margin-top: 2px; }
.brand span { color: #2898dc; }
.addr { flex: 1; color: #000; white-space: nowrap; font: 11px "Open Sans", sans-serif; }
.addr p { border: 1px solid #b0b0b4; padding-left: 0; box-sizing: border-box; }
.addr .co { height: 27px; font-size: 18px; line-height: 30px; }
.addr .ad { height: 37px; line-height: 16px; }
.addr .ph { height: 18px; line-height: 16px; border-bottom: 0; }
.addr .web { height: 27px; line-height: 16px; border-top: 0; }
.foot { height: 29px; border-top: 1px solid #b8b8ba; border-bottom: 1px dashed #88888a; box-sizing: border-box; }
.line { height: 5px; }
.date { margin-top: 5px; height: 17px; display: flex; gap: 12px; padding-left: 2px; color: #000; font: 11px/20px "Open Sans", sans-serif; white-space: nowrap; }
.mbot { height: 22px; }
.splitter { width: 14px; height: 3px; margin: 0 auto 22px; background: repeating-linear-gradient(90deg, #8c8c94 0 1px, transparent 1px 2px); }
.tray { display: flex; align-items: center; gap: 5px; padding: 0 0 16px 22px; }
.dbar { display: flex; align-items: center; height: 25px; padding: 0 0 1px 2px; border-top: 1px solid #b8b8c0; background: linear-gradient(#dedee4, #cbcbd3); font-size: 12px; }
.dbtn { display: flex; align-items: center; gap: 3px; height: 22px; padding: 0 4px 0 3px; white-space: nowrap; }
.dbtn.on { padding: 0 2px; border: 1px solid #b0b0b8; border-width: 0 1px; background: #d0d0d8; }
.dsep { height: 18px; border-left: 1px solid #c0c0c8; border-right: 1px solid #ececf0; margin: 0 4px 0 3px; }
.tpl { margin-left: 5px; white-space: nowrap; }
.zoom { margin-left: auto; display: flex; align-items: center; gap: 6px; padding: 0 8px 0 5px; border-left: 1px solid #b0b0b8; }
.zr { appearance: none; width: 98px; height: 18px; margin: 0; background: linear-gradient(90deg, transparent, #a890b8 30% 50%, #b0b0b8 50% 70%, transparent) center / 100% 1px no-repeat; }
.zr::-webkit-slider-thumb { appearance: none; width: 11px; height: 17px; background: linear-gradient(#e4e8f4, #b4bcd4); border: 1px solid #77778a; clip-path: polygon(0 0, 100% 0, 100% 65%, 50% 100%, 0 65%); }

.side { width: 30px; display: flex; flex-direction: column; gap: 4px; padding: 5px 0 0 8px; box-sizing: border-box; }
.stab { width: 19px; box-sizing: border-box; border: 1px solid #a0a0a6; border-width: 1px 0; background: #e4e4e8; padding: 5px 0 0; display: flex; flex-direction: column; align-items: center; gap: 2px; }
.stab span { writing-mode: vertical-rl; white-space: nowrap; font-size: 11px; line-height: 16px; }

.status { display: flex; align-items: center; justify-content: space-between; height: 26px; border: 1px solid #b0b0b8; background: linear-gradient(#dedee3, #cbcbd3); padding: 0 2px 0 7px; }
.status svg { align-self: flex-end; margin-bottom: 2px; }
.shade { position: absolute; inset: 0; background: rgba(0, 0, 0, .36); z-index: 2; pointer-events: none; }

.tip { position: absolute; left: 1250px; top: 728px; z-index: 1; width: 160px; height: 42px; border: 1px solid #77777f; background: #fff; box-shadow: 3px 3px 3px rgba(0, 0, 0, .35); display: flex; flex-direction: column; padding: 0 0 0 8px; white-space: nowrap; box-sizing: content-box; }
.tip b { font-weight: 600; line-height: 24px; }
.tip span { padding-left: 6px; line-height: 13px; }

.dialog { position: absolute; z-index: 4; left: 542px; right: 28px; top: 123px; bottom: 206px; box-sizing: border-box; border: 1px solid #8c8c98; border-radius: 5px 5px 2px 2px; background: #c9cad2; padding: 0 4px 3px; display: flex; flex-direction: column; box-shadow: inset 1px 1px #f4f4f8, inset -1px -1px #dcdce4; }
.dtitle { display: grid; grid-template-columns: 20px 1fr 34px; align-items: center; height: 24px; margin: 0 -3px; padding-bottom: 1px; background: linear-gradient(#dcdde2, #c4c5cd); border-radius: 4px 4px 0 0; text-align: center; font-weight: 600; }
.dtitle > svg { margin-left: 4px; }
.dclose { width: 28px; height: 15px; box-sizing: border-box; border: 1px solid #a0a1ac; border-radius: 3px; background: linear-gradient(#f0f0f4, #d8d8de); display: grid; place-items: center; }
.dbody { flex: 1; display: flex; flex-direction: column; background: #ebecf0; border: 1px solid #b4b5be; border-width: 0 1px; padding: 3px 5px 7px 2px; }
.intro { display: flex; gap: 6px; }
.ibox { width: 58px; height: 43px; border: 1px solid #c0c1c8; background: #fff; display: grid; place-items: center; }
.itxt { display: flex; flex-direction: column; gap: 5px; color: #000; }
.ptabs { display: flex; align-items: flex-end; margin: 5px 0 0 3px; height: 23px; }
.ptab { height: 20px; width: 72px; border: 1px solid #a0a1ac; border-left: 0; border-bottom: 0; background: linear-gradient(#e8e8ec, #dcdce0); color: #55556a; box-shadow: inset 0 0 0 1px #f0f0f4; }
.ptab.on { width: 81px; height: 24px; margin-bottom: -1px; background: #fff; border-left: 1px solid #a0a1ac; color: #1e1e36; z-index: 1; box-shadow: none; }
.panel { flex: 1; display: flex; flex-direction: column; border: 1px solid #a0a1ac; border-right-width: 2px; border-bottom-width: 2px; padding: 4px 5px 5px 5px; box-shadow: inset 1px 1px #fff, inset -1px -1px #fff; }
.hint { line-height: 16px; padding-bottom: 4px; color: #1e1e36; white-space: nowrap; }
.gbox { flex: 1; border: 1px solid #b8b9c2; border-radius: 3px; background: #fff; padding: 0 1px; }
.gcap { line-height: 18px; padding-left: 11px; background: linear-gradient(#e2e3e7, #e9eaed); margin: 0 -1px; }
.tbl { width: 100%; table-layout: fixed; border-collapse: separate; border-spacing: 0; }
.c0 { width: 16px; } .c1 { width: 223px; } .c2 { width: 202px; } .c3 { width: 115px; }
.tbl th, .tbl td { box-sizing: border-box; padding: 0 3px; border: 1px solid #d8d9e0; border-width: 0 1px 1px 0; text-align: left; font-weight: 400; height: 21px; }
.tbl th { background: linear-gradient(#fbfbfc, #eff0f3); border-color: #c4c5cd; border-top: 1px solid #d4d5da; height: 22px; }
.tbl td.ind { background: #f5f5f8; padding: 0; border-color: #c4c5cd; }
.ind svg { margin: auto; }
.cur td { background: #e0e9fd; }
.cur td.focus { background: #fff; border: 1px dotted #111; padding-left: 2px; }
.cell { display: flex; align-items: center; height: 18px; }
.dots { width: 11px; height: 2px; background: repeating-linear-gradient(90deg, #1a1a2a 0 2px, transparent 2px 4px); margin: 0 0 0 auto; }
.tbl td.ck { text-align: center; }
.ck input { appearance: none; width: 13px; height: 13px; margin: 0 auto; border: 1px solid #9496a4; background: linear-gradient(#f4f5f8, #dcdde4); display: block; position: relative; box-sizing: border-box; }
.ck input:checked::after { content: ""; position: absolute; left: 1px; top: -2px; width: 12px; height: 12px; background: #222230; clip-path: polygon(0 50%, 13% 44%, 36% 74%, 92% 0, 100% 3%, 40% 100%, 32% 100%); }
.ck input.mixed::after { content: ""; position: absolute; inset: 1px; background: linear-gradient(#b4c8f4, #7c9ce4); border: 1px solid #4c6cb8; }
.dfoot { display: flex; justify-content: flex-end; align-items: center; gap: 3px; height: 26px; border: 1px solid #b4b5be; background: linear-gradient(#dfe0e5, #c8c9d1); padding-right: 3px; }
.fsep { height: 18px; border-left: 1px solid #a4a5b0; border-right: 1px solid #ececf0; }
.fbtn { display: flex; align-items: center; gap: 6px; height: 21px; padding: 0 5px; }
.fbtn.ok { border: 1px solid #a8b4dc; background: linear-gradient(#dde4f8, #c8d2f0); border-radius: 2px; }
</style>
